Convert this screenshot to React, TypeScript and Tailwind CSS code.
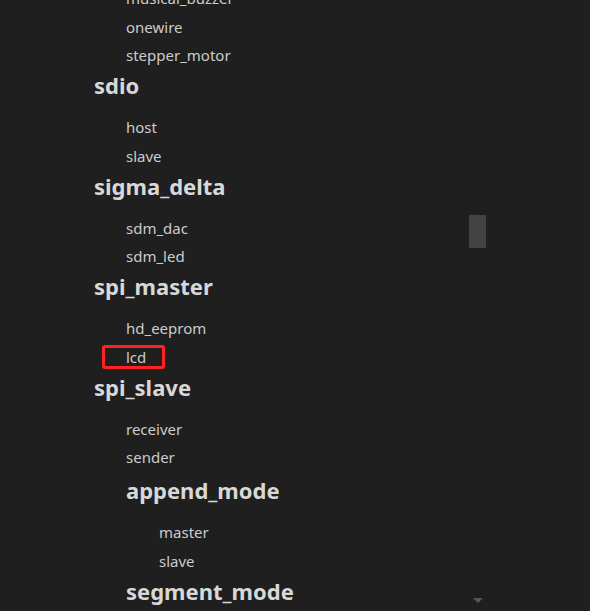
const Item = ({ text, boxed }: { text: string; boxed?: boolean }) => (
  <li className="h-[28.5px] flex items-center">
    {boxed ? (
      <span className="relative">
        {text}
        <span className="absolute left-[-24px] right-[-19px] top-[-1px] bottom-[-1px] border-[3px] border-[#ff2222] rounded-[3px]" />
      </span>
    ) : (
      text
    )}
  </li>
);

const H2 = ({ text }: { text: string }) => (
  <h2 className="h-[32px] flex items-center text-[22px] font-bold text-[#d8d8d8] mb-[11.5px]">{text}</h2>
);

export default function App() {
  return (
    <div className="relative w-[590px] h-[611px] overflow-hidden bg-[#1f1f1f] font-['Noto_Sans',sans-serif] text-[#cccccc]">
      <div className="pl-[94px] mt-[-16px]">
        <ul className="pl-[32px] text-[15px]">
          <Item text="musical_buzzer" />
          <Item text="onewire" />
          <Item text="stepper_motor" />
        </ul>
        <H2 text="sdio" />
        <ul className="pl-[32px] text-[15px]">
          <Item text="host" />
          <Item text="slave" />
        </ul>
        <H2 text="sigma_delta" />
        <ul className="pl-[32px] text-[15px]">
          <Item text="sdm_dac" />
          <Item text="sdm_led" />
        </ul>
        <H2 text="spi_master" />
        <ul className="pl-[32px] text-[15px]">
          <Item text="hd_eeprom" />
          <Item text="lcd" boxed />
        </ul>
        <H2 text="spi_slave" />
        <ul className="pl-[32px] text-[15px]">
          <Item text="receiver" />
          <Item text="sender" />
        </ul>
        <div className="pl-[32px] mt-[3px]">
          <H2 text="append_mode" />
          <ul className="pl-[33px] text-[15px] mt-[4.5px]">
            <Item text="master" />
            <Item text="slave" />
          </ul>
          <H2 text="segment_mode" />
        </div>
      </div>
      <div className="absolute left-[469px] top-[215px] w-[17px] h-[33px] bg-[#434343]" />
      <div className="absolute left-[473px] top-[598px] w-0 h-0 border-l-[5px] border-r-[5px] border-t-[5px] border-l-transparent border-r-transparent border-t-[#575757]" />
    </div>
  );
}
